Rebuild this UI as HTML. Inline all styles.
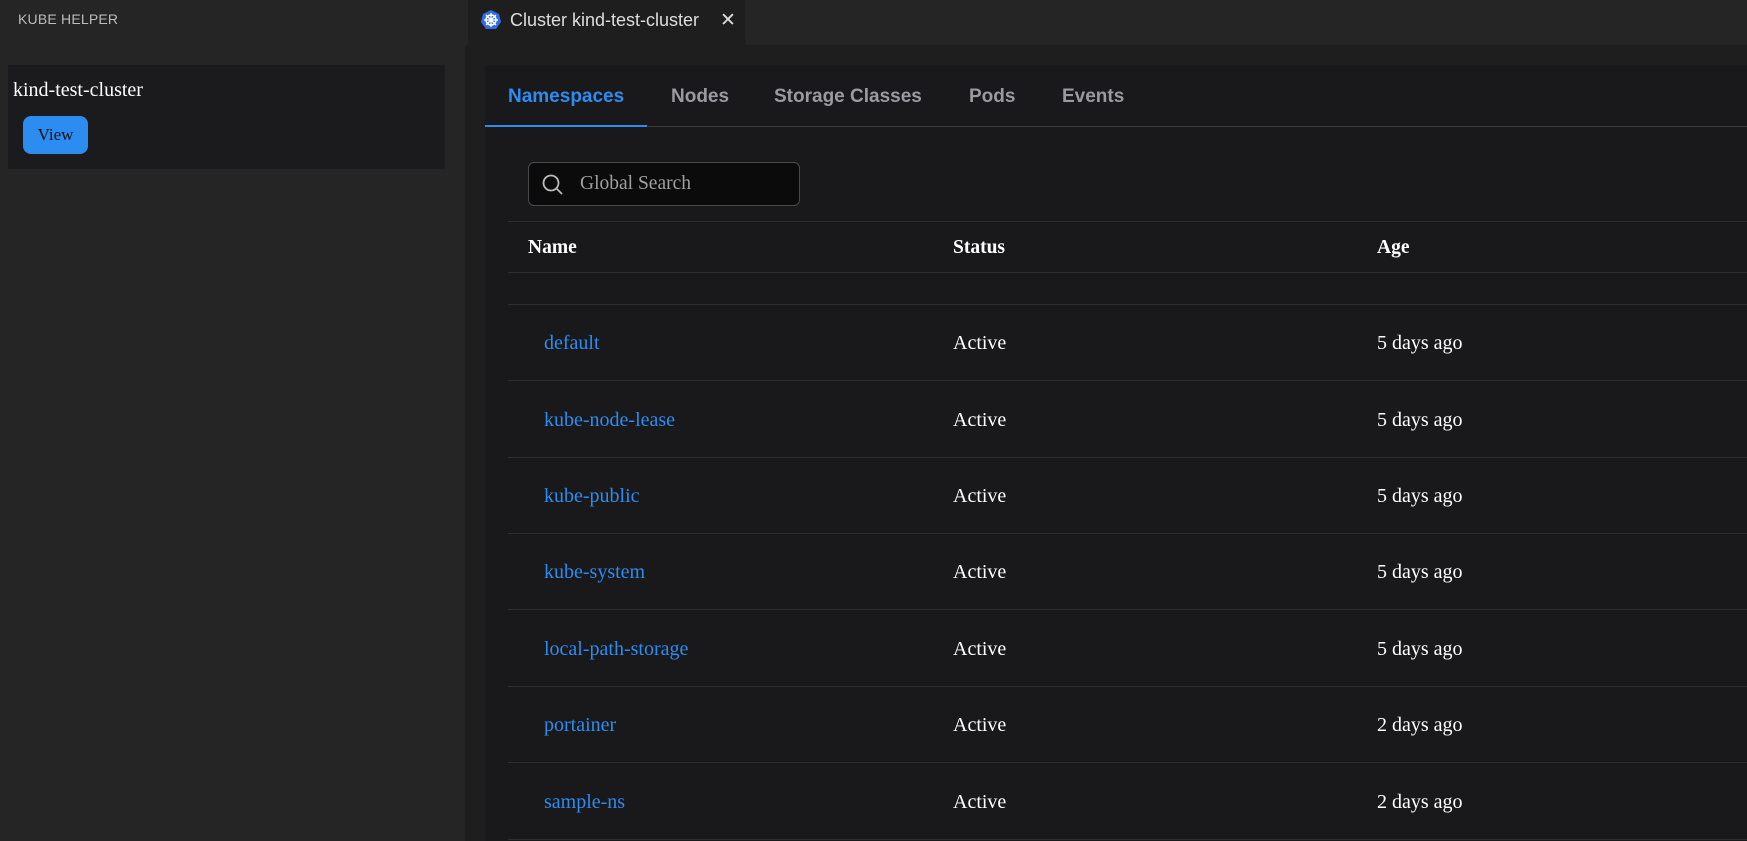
<!DOCTYPE html>
<html><head><meta charset="utf-8"><style>
*{margin:0;padding:0;box-sizing:border-box}
body{width:1747px;height:841px;background:#1e1e1e;overflow:hidden;position:relative;font-family:"Liberation Serif",serif;color:#fff}
.side{position:absolute;left:0;top:0;width:465px;height:841px;background:#252526}
.side .t{position:absolute;left:18px;top:11px;font:14px "Liberation Sans",sans-serif;color:#bbb;letter-spacing:.2px}
.card{position:absolute;left:8px;top:65px;width:437px;height:104px;background:#1b1b1d}
.card .n{position:absolute;left:5px;top:14px;font-size:20px;color:#fff}
.card .b{position:absolute;left:15px;top:51px;width:65px;height:38px;background:#2d8cf0;border-radius:8px;font-size:17px;color:#111;text-align:center;line-height:38px}
.tabbar{position:absolute;left:465px;top:0;right:0;height:45px;background:#252526}
.tab{position:absolute;left:468px;top:0;width:277px;height:45px;background:#1e1e1e}
.tab .l{position:absolute;left:42px;top:10px;font:18px "Liberation Sans",sans-serif;color:#ddd}
.tab .x{position:absolute;left:252px;top:9px;font:19px "Liberation Sans",sans-serif;color:#ddd}
.panel{position:absolute;left:485px;top:65px;right:0;bottom:0;background:#19191b}
.navl{position:absolute;left:0;right:0;top:61px;height:1px;background:#3a3a3c}
.nav{position:absolute;top:21px;font:bold 19px "Liberation Sans",sans-serif;color:#9a9aa0}
.act{color:#2d8cf0}
.ul{position:absolute;left:0;top:60px;width:162px;height:2px;background:#2d8cf0}
.search{position:absolute;left:43px;top:97px;width:272px;height:44px;background:#0b0b0c;border:1px solid #4a4a4e;border-radius:6px}
.search span{position:absolute;left:51px;top:10px;font-size:19.5px;color:#a0a0a0}
.hl{position:absolute;left:23px;right:0;height:1px;background:#2e2e31}
.th{position:absolute;top:172px;font-weight:bold;font-size:19.5px}
.c{position:absolute;font-size:20px;margin-top:2px}
.nm{color:#2d8cf0}
</style></head><body>
<div class="side"><div class="t">KUBE HELPER</div>
<div class="card"><div class="n">kind-test-cluster</div><div class="b">View</div></div></div>
<div class="tabbar"></div>
<div class="tab">
<svg style="position:absolute;left:12px;top:9px" width="22" height="22" viewBox="0 0 22 22"><polygon points="11,1 19,5 21,13 16,20 6,20 1,13 3,5" fill="#326ce5"/><circle cx="11" cy="11" r="5" fill="none" stroke="#fff" stroke-width="1.5"/><g stroke="#fff" stroke-width="1.3"><line x1="11" y1="4" x2="11" y2="18"/><line x1="4" y1="11" x2="18" y2="11"/><line x1="6" y1="6" x2="16" y2="16"/><line x1="16" y1="6" x2="6" y2="16"/></g></svg>
<div class="l">Cluster kind-test-cluster</div><div class="x">✕</div></div>
<div class="panel">
<div class="navl"></div><div class="ul"></div>
<div class="nav act" style="left:23px">Namespaces</div>
<div class="nav" style="left:186px">Nodes</div>
<div class="nav" style="left:289px">Storage Classes</div>
<div class="nav" style="left:484px">Pods</div>
<div class="nav" style="left:577px">Events</div>
<div class="search"><svg style="position:absolute;left:12px;top:10px" width="24" height="24" viewBox="0 0 24 24" fill="none" stroke="#bbb" stroke-width="1.8"><circle cx="10" cy="10" r="7.5"/><line x1="15.5" y1="15.5" x2="21" y2="21"/></svg><span>Global Search</span></div>
<div class="hl" style="top:156px"></div>
<div class="th" style="left:43px">Name</div><div class="th" style="left:468px">Status</div><div class="th" style="left:892px">Age</div>
<div class="hl" style="top:207px"></div>
<div class="hl" style="top:239px"></div>
<div class="hl" style="top:315px"></div>
<div class="hl" style="top:392px"></div>
<div class="hl" style="top:468px"></div>
<div class="hl" style="top:544px"></div>
<div class="hl" style="top:621px"></div>
<div class="hl" style="top:697px"></div>
<div class="hl" style="top:774px"></div>
<div class="c nm" style="left:59px;top:265px">default</div><div class="c" style="left:468px;top:265px">Active</div><div class="c" style="left:892px;top:265px">5 days ago</div>
<div class="c nm" style="left:59px;top:342px">kube-node-lease</div><div class="c" style="left:468px;top:342px">Active</div><div class="c" style="left:892px;top:342px">5 days ago</div>
<div class="c nm" style="left:59px;top:418px">kube-public</div><div class="c" style="left:468px;top:418px">Active</div><div class="c" style="left:892px;top:418px">5 days ago</div>
<div class="c nm" style="left:59px;top:494px">kube-system</div><div class="c" style="left:468px;top:494px">Active</div><div class="c" style="left:892px;top:494px">5 days ago</div>
<div class="c nm" style="left:59px;top:571px">local-path-storage</div><div class="c" style="left:468px;top:571px">Active</div><div class="c" style="left:892px;top:571px">5 days ago</div>
<div class="c nm" style="left:59px;top:647px">portainer</div><div class="c" style="left:468px;top:647px">Active</div><div class="c" style="left:892px;top:647px">2 days ago</div>
<div class="c nm" style="left:59px;top:724px">sample-ns</div><div class="c" style="left:468px;top:724px">Active</div><div class="c" style="left:892px;top:724px">2 days ago</div>
</div>
</body></html>
